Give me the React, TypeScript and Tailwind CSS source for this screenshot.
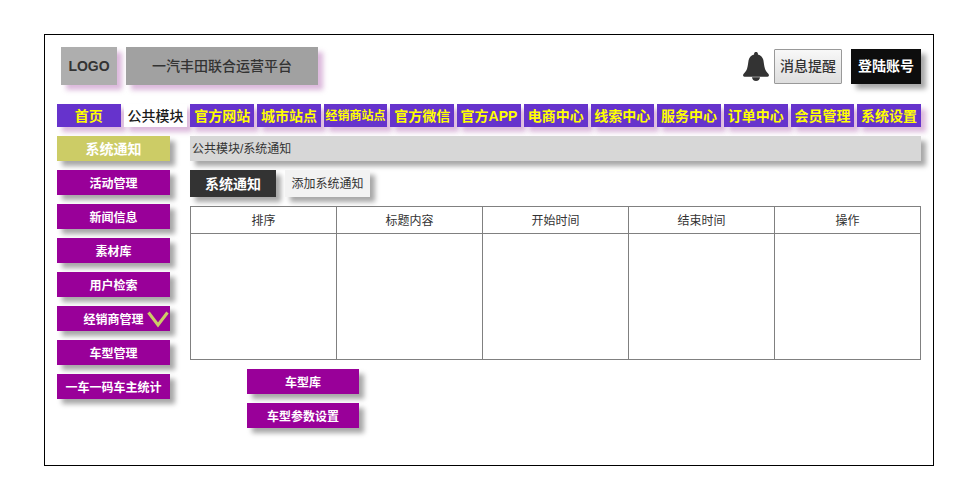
import type { ReactNode } from 'react';

const NAV = [
  '首页', '公共模块', '官方网站', '城市站点', '经销商站点', '官方微信', '官方APP',
  '电商中心', '线索中心', '服务中心', '订单中心', '会员管理', '系统设置',
];

const SIDE = ['系统通知', '活动管理', '新闻信息', '素材库', '用户检索', '经销商管理', '车型管理', '一车一码车主统计'];

const COLUMNS = ['排序', '标题内容', '开始时间', '结束时间', '操作'];

const GREY_SHADOW = 'shadow-[5px_5px_5px_rgba(0,0,0,0.35)]';
const PLUM_SHADOW = 'shadow-[5px_5px_5px_rgba(153,51,153,0.35)]';

function NavItem({ label }: { label: string }) {
  const current = label === '公共模块';
  const size = label === '经销商站点' ? 'text-xs' : 'text-sm';
  const tone = current ? 'bg-white text-[#1a1a1a] font-medium' : 'bg-[#6633cc] text-[#ffff00] font-bold';
  return (
    <button
      type="button"
      aria-current={current ? 'page' : undefined}
      className={`flex h-[23px] min-w-0 flex-1 items-center justify-center whitespace-nowrap ${PLUM_SHADOW} ${size} ${tone}`}
    >
      {label}
    </button>
  );
}

function MenuButton({ children, current = false }: { children: ReactNode; current?: boolean }) {
  const tone = current ? 'bg-[#cccc66] text-sm' : 'bg-[#990099] pt-0.5 text-xs';
  return (
    <button
      type="button"
      className={`relative flex h-[25px] w-full items-center justify-center whitespace-nowrap font-bold text-white ${GREY_SHADOW} ${tone}`}
    >
      {children}
    </button>
  );
}

function Bell() {
  return (
    <svg viewBox="0 0 26 29" className="h-[29px] w-[26px]" fill="#333333" aria-hidden="true">
      <path d="M13 0c-1.100 0-1.900.7-1.900 1.700v.7C8.300 3.100 6.200 5.200 5.600 8.300c-.5 2.600-.6 5.200-1.500 8.200-.6 2-1.800 3.600-3.400 5.300-.9 1-1 2.800.8 3h23c1.800-.2 1.700-2 .8-3-1.600-1.700-2.800-3.300-3.400-5.300-.9-3-1-5.600-1.500-8.200-.6-3.100-2.700-5.200-5.500-5.900v-.7C14.900.7 14.100 0 13 0z" />
      <path d="M9 25.200h8c-.2 2.300-1.700 3.800-4 3.800s-3.800-1.500-4-3.800z" />
    </svg>
  );
}

export default function App() {
  return (
    <div className="bg-white pt-[34px] pr-[23px] pb-[21px] pl-11 font-['Liberation_Sans','Noto_Sans_CJK_SC',sans-serif] text-[#333333]">
      <div className="border border-black px-3 pt-3 pb-[37px]">
        <header className="flex h-[38px] items-center pl-1">
          <div className={`flex h-full w-14 items-center justify-center bg-[#aeaeae] text-sm font-bold ${PLUM_SHADOW}`}>
            LOGO
          </div>
          <h1 className={`ml-[9px] flex h-full w-48 items-center justify-center bg-[#a1a1a1] text-sm font-medium ${PLUM_SHADOW}`}>
            一汽丰田联合运营平台
          </h1>
          <div className="ml-auto flex items-center">
            <Bell />
            <button
              type="button"
              className="ml-[5px] h-[35px] w-[68px] rounded-[1px] border border-[#999999] bg-linear-to-b from-[#f8f8f8] to-[#dedede] text-sm font-medium"
            >
              消息提醒
            </button>
            <button type="button" className={`ml-[9px] h-[35px] w-[70px] bg-[#0d0d0d] text-sm font-bold text-white ${GREY_SHADOW}`}>
              登陆账号
            </button>
          </div>
        </header>

        <nav className="mt-[19px] flex gap-[3px]">
          {NAV.map((label) => (
            <NavItem key={label} label={label} />
          ))}
        </nav>

        <div className="mt-[9px] flex gap-5">
          <aside className="flex w-[113px] flex-none flex-col gap-[9px]">
            {SIDE.map((label) => (
              <MenuButton key={label} current={label === '系统通知'}>
                {label}
                {label === '经销商管理' && (
                  <svg viewBox="0 0 22 17" className="absolute right-px h-[17px] w-[22px]" aria-hidden="true">
                    <path d="M1.500 1.500L11 14L20.500 1.500" fill="none" stroke="#cccc66" strokeWidth="3" />
                  </svg>
                )}
              </MenuButton>
            ))}
          </aside>

          <main className="min-w-0 flex-1">
            <div className={`flex h-[25px] items-center bg-[#d7d7d7] px-0.5 text-xs ${GREY_SHADOW}`}>公共模块/系统通知</div>

            <div className="mt-[9px] flex gap-[9px]">
              <button type="button" className={`h-[27px] w-[86px] bg-[#333333] text-sm font-bold text-white ${GREY_SHADOW}`}>
                系统通知
              </button>
              <button type="button" className={`h-[27px] w-[85px] bg-[#f2f2f2] text-xs ${GREY_SHADOW}`}>
                添加系统通知
              </button>
            </div>

            <table className="mt-[9px] w-full table-fixed border-collapse text-xs">
              <thead>
                <tr className="h-[27px]">
                  {COLUMNS.map((name) => (
                    <th key={name} scope="col" className="border border-[#808080] p-0 pt-0.5 font-normal">
                      {name}
                    </th>
                  ))}
                </tr>
              </thead>
              <tbody>
                <tr className="h-[126px]">
                  {COLUMNS.map((name) => (
                    <td key={name} className="border border-[#808080]" />
                  ))}
                </tr>
              </tbody>
            </table>

            <div className="mt-[9px] ml-[57px] flex w-28 flex-col gap-[9px]">
              <MenuButton>车型库</MenuButton>
              <MenuButton>车型参数设置</MenuButton>
            </div>
          </main>
        </div>
      </div>
    </div>
  );
}
